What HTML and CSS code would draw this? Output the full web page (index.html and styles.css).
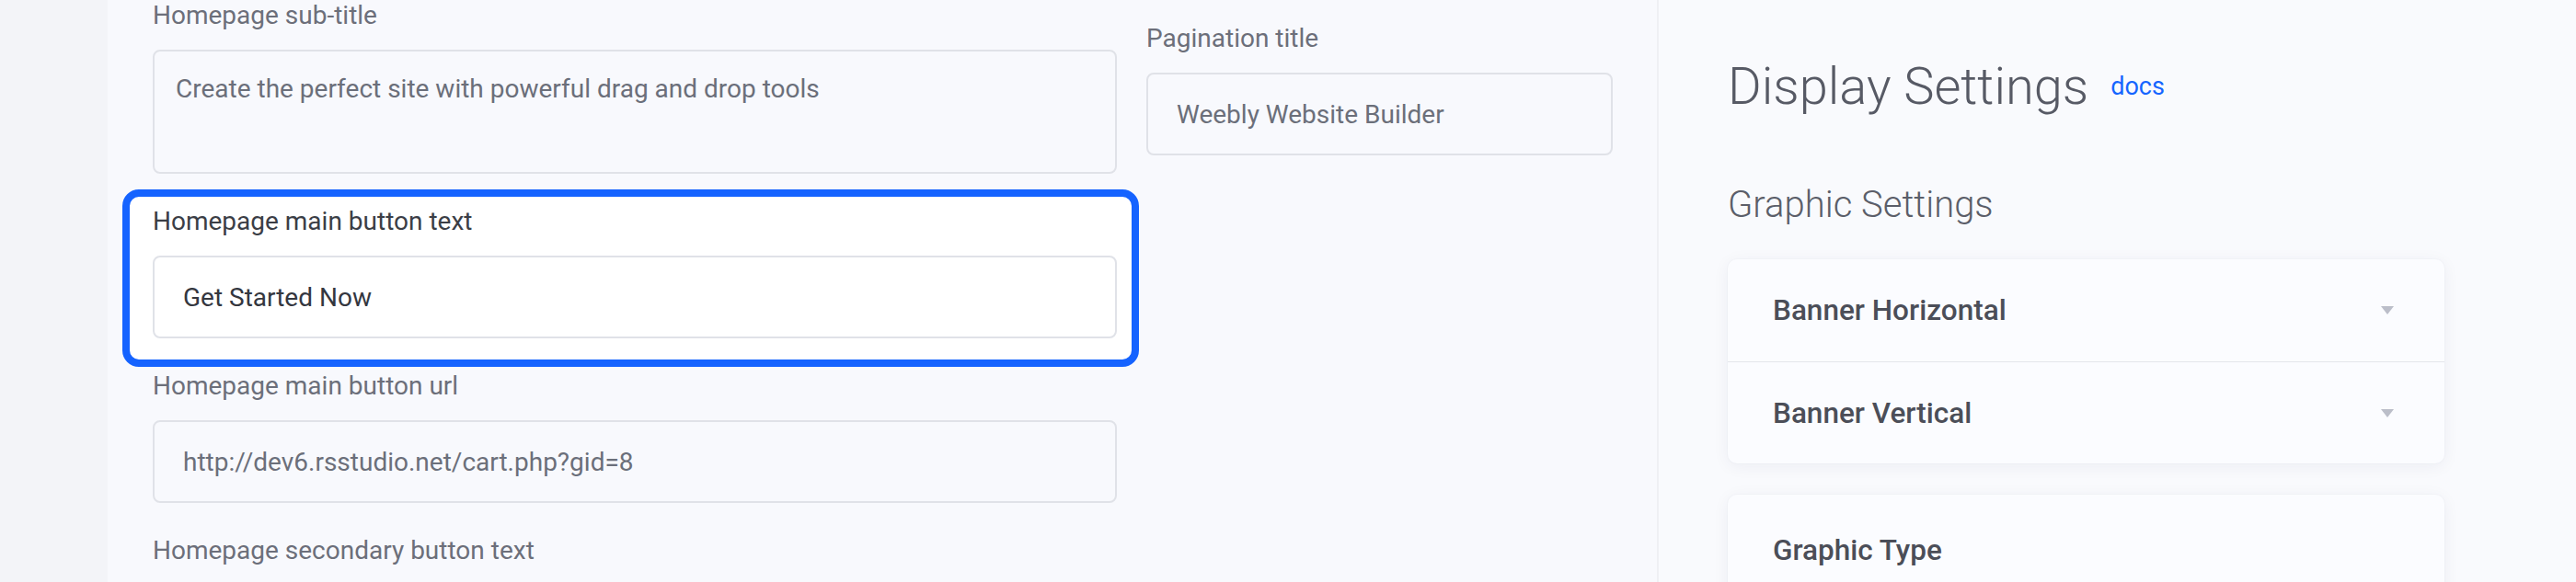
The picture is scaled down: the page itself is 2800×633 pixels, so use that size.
FILE: index.html
```html
<!DOCTYPE html>
<html lang="en">
<head>
<meta charset="utf-8">
<title>Display Settings</title>
<link rel="stylesheet" href="styles.css">
</head>
<body>
<div class="layout">
  <div class="gutter"></div>
  <main class="editor">
    <div class="col-main">
      <div class="group">
        <label class="label">Homepage sub-title</label>
        <textarea class="field area" readonly>Create the perfect site with powerful drag and drop tools</textarea>
      </div>
      <div class="group is-focused">
        <label class="label">Homepage main button text</label>
        <input class="field" type="text" value="Get Started Now" readonly>
      </div>
      <div class="group">
        <label class="label">Homepage main button url</label>
        <input class="field" type="text" value="http://dev6.rsstudio.net/cart.php?gid=8" readonly>
      </div>
      <div class="group">
        <label class="label">Homepage secondary button text</label>
      </div>
    </div>
    <div class="col-side">
      <div class="group">
        <label class="label">Pagination title</label>
        <input class="field" type="text" value="Weebly Website Builder" readonly>
      </div>
    </div>
  </main>
  <section class="display">
    <h1 class="title">Display Settings <a class="docs" href="#">docs</a></h1>
    <h2 class="subtitle">Graphic Settings</h2>
    <div class="card">
      <div class="row"><span>Banner Horizontal</span><span class="caret"></span></div>
      <div class="row"><span>Banner Vertical</span><span class="caret"></span></div>
    </div>
    <div class="card card-second">
      <div class="row"><span>Graphic Type</span></div>
    </div>
  </section>
</div>
</body>
</html>
```
FILE: styles.css
```css
* { box-sizing: border-box; }
html, body { margin: 0; padding: 0; }
body {
  font-family: Roboto, "Liberation Sans", sans-serif;
  font-size: 28px;
  background: #f8f9fc;
  height: 633px;
  overflow: hidden;
}
.layout {
  display: flex;
  align-items: stretch;
  min-height: 633px;
}
.gutter {
  width: 117px;
  flex: none;
  background: #f3f4f8;
}
.editor {
  width: 1684px;
  flex: none;
  background: #f8f9fd;
  display: grid;
  grid-template-columns: 1048px 507px;
  column-gap: 32px;
  padding: 0 48px 0 49px;
  align-items: start;
}
.col-side { padding-top: 25px; }
.group {
  position: relative;
  isolation: isolate;
  margin-bottom: 35px;
}
.label {
  display: block;
  font-size: 28px;
  line-height: 34px;
  color: #6c6f7a;
  margin-bottom: 20px;
}
.field {
  display: block;
  width: 100%;
  height: 90px;
  font: inherit;
  font-size: 28px;
  color: #6b6f7a;
  background: transparent;
  border: 2px solid #e0e2e8;
  border-radius: 8px;
  padding: 0 30px 0 31px;
  outline: none;
}
.area {
  height: 135px;
  resize: none;
  line-height: 42px;
  padding: 20px 24px 0 23px;
}
.is-focused::before {
  content: "";
  position: absolute;
  z-index: -1;
  top: -18px;
  bottom: -31px;
  left: -33px;
  right: -24px;
  background: #ffffff;
  border: 8px solid #1563ff;
  border-radius: 18px;
}
.is-focused .label { color: #3b3e46; }
.is-focused .field { color: #34373f; }

.display {
  flex: 1;
  background: #f9fafd;
  border-left: 2px solid #eff0f4;
  padding: 61px 0 0 75px;
}
.title {
  margin: 0;
  font-size: 56px;
  line-height: 66px;
  font-weight: 300;
  color: #575a65;
  display: flex;
  align-items: baseline;
}
.docs {
  font-size: 27px;
  font-weight: 400;
  color: #1565ff;
  text-decoration: none;
  margin-left: 24px;
  position: relative;
  top: -10px;
}
.subtitle {
  margin: 62px 0 36px;
  font-size: 40px;
  line-height: 47px;
  font-weight: 300;
  color: #5b5e69;
}
.card {
  width: 779px;
  background: #fbfcff;
  border-radius: 10px;
  box-shadow: 0 3px 18px rgba(30, 40, 80, 0.06), 0 0 0 1px rgba(30, 40, 80, 0.015);
  margin-bottom: 34px;
}
.card-second { padding-top: 5px; }
.row {
  height: 111px;
  display: flex;
  align-items: center;
  justify-content: space-between;
  padding: 0 55px 0 49px;
  font-size: 31.5px;
  font-weight: 500;
  color: #4b4e58;
}
.row + .row { border-top: 1px solid #e4e6eb; }
.caret {
  width: 0;
  height: 0;
  border-left: 7px solid transparent;
  border-right: 7px solid transparent;
  border-top: 9px solid #bbbec9;
}
```
